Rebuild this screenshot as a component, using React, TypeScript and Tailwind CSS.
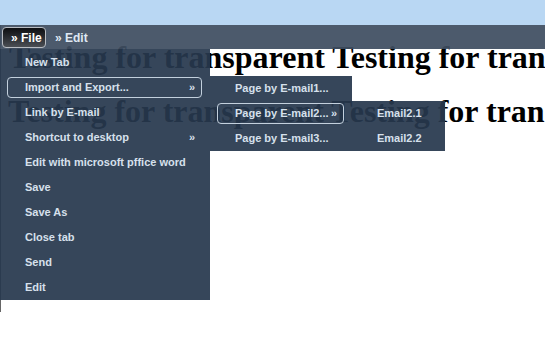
import React from "react";

type Item = { label: string; sub?: boolean; active?: boolean };

const fileItems: Item[] = [
  { label: "New Tab" },
  { label: "Import and Export...", sub: true, active: true },
  { label: "Link by E-mail" },
  { label: "Shortcut to desktop", sub: true },
  { label: "Edit with microsoft pffice word" },
  { label: "Save" },
  { label: "Save As" },
  { label: "Close tab" },
  { label: "Send" },
  { label: "Edit" },
];

const pageItems: Item[] = [
  { label: "Page by E-mail1..." },
  { label: "Page by E-mail2...", sub: true, active: true },
  { label: "Page by E-mail3..." },
];

const emailItems: Item[] = [{ label: "Email2.1" }, { label: "Email2.2" }];

const MenuRow = ({ item }: { item: Item }) => (
  <div className="h-[25px] flex items-center pl-[7px] pr-[8px]">
    <div
      className={
        item.active
          ? "h-[21px] flex-1 flex items-center justify-between rounded-[4px] border border-[#c3d0dd] pl-[17px] pr-[6px]"
          : "h-[21px] flex-1 flex items-center justify-between rounded-[4px] border border-transparent pl-[17px] pr-[6px]"
      }
    >
      <span>{item.label}</span>
      {item.sub && <span>»</span>}
    </div>
  </div>
);

const App = () => {
  return (
    <div className="relative w-[545px] h-[344px] overflow-hidden bg-white font-['Liberation_Sans',Arial,sans-serif]">
      <div className="h-[25px] bg-[#b9d7f3]" />
      <div className="h-[287px] border-l border-[#666] overflow-hidden">
        <div className="mt-[5px] pl-[8px] whitespace-nowrap font-['Liberation_Serif','Times_New_Roman',serif] font-bold text-[32px] leading-[54px] text-black">
          Testing for transparent Testing for transparent
        </div>
        <div className="pl-[7px] whitespace-nowrap font-['Liberation_Serif','Times_New_Roman',serif] font-bold text-[32px] leading-[54px] text-black">
          Testing for transparent Testing for transparent
        </div>
      </div>

      {/* menu bar */}
      <div className="absolute left-0 top-[25px] w-full h-[24px] bg-[#3e4e61]/[0.93] flex items-center pl-[2px] text-[12px] font-bold">
        <div className="h-[21px] w-[44px] mt-[1px] flex items-center pl-[8px] rounded-[4px] border border-[#b8bcc2] bg-gradient-to-b from-[#0e0f12] to-[#4b4f55] text-white">
          » File
        </div>
        <div className="ml-[9px] mt-[1px] text-[#dfe8f3]">» Edit</div>
      </div>

      {/* File dropdown */}
      <div className="absolute left-0 top-[49px] w-[210px] pt-[1px] bg-[#27384e]/[0.93] text-[11px] font-bold text-[#d6e0ec]">
        {fileItems.map((it) => (
          <MenuRow key={it.label} item={it} />
        ))}
      </div>

      {/* Import and Export submenu */}
      <div className="absolute left-[210px] top-[76px] w-[142px] bg-[#27384e]/[0.93] text-[11px] font-bold text-[#d6e0ec]">
        {pageItems.map((it) => (
          <MenuRow key={it.label} item={it} />
        ))}
      </div>

      {/* Page by E-mail2 submenu */}
      <div className="absolute left-[352px] top-[101px] w-[93px] bg-[#27384e]/[0.93] text-[11px] font-bold text-[#d6e0ec]">
        {emailItems.map((it) => (
          <MenuRow key={it.label} item={it} />
        ))}
      </div>
    </div>
  );
};

export default App;
